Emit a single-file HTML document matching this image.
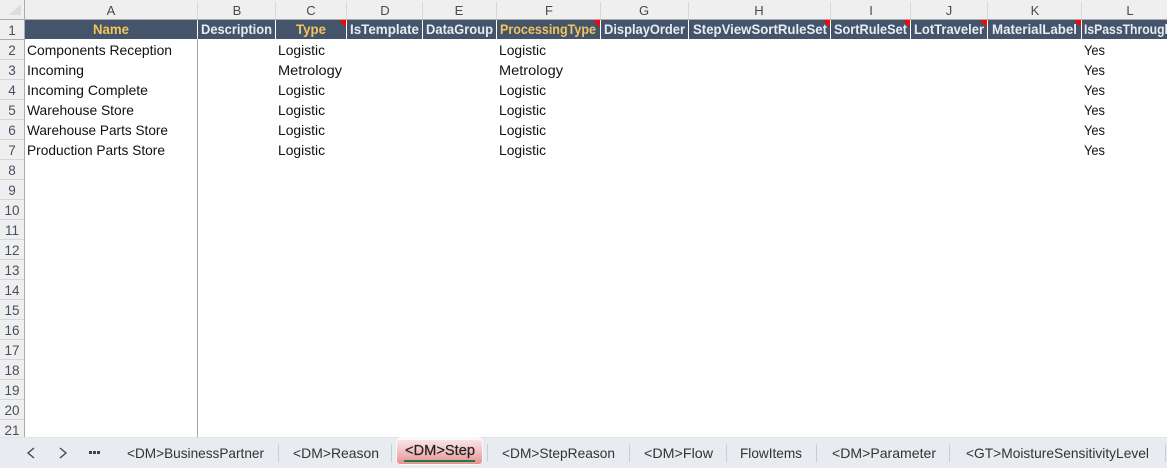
<!DOCTYPE html>
<html>
<head>
<meta charset="utf-8">
<style>
html,body{margin:0;padding:0;background:#fff;width:1167px;height:468px;overflow:hidden}
svg{display:block}
text{font-family:"Liberation Sans",sans-serif}
.b{font-size:14px;fill:#111}
.h{font-size:14px;font-weight:bold;fill:#e6ecf2}
.y{font-size:14px;font-weight:bold;fill:#f5c35c}
.c{font-size:13px;fill:#4a4a4a;text-anchor:middle}
.r{font-size:13.5px;fill:#445063;text-anchor:middle}
.t{font-size:14px;fill:#333}
</style>
</head>
<body>
<svg width="1167" height="468" viewBox="0 0 1167 468" xmlns="http://www.w3.org/2000/svg">
<defs>
<linearGradient id="tab" x1="0" y1="0" x2="0" y2="1">
<stop offset="0" stop-color="#f8e2e2"/>
<stop offset=".3" stop-color="#f3d0d0"/>
<stop offset="1" stop-color="#e88f8f"/>
</linearGradient>
</defs>
<rect width="1167" height="468" fill="#fff"/>
<!-- column header -->
<rect x="0" y="0" width="1167" height="19" fill="#efefef"/>
<rect x="0" y="0" width="24" height="437" fill="#efefef"/>
<polygon points="21,4 21,15 9,15" fill="#dcdcdc"/>
<rect x="0" y="19" width="1167" height="1" fill="#ababab"/>
<rect x="24" y="0" width="1" height="437" fill="#ababab"/>
<g fill="#d8d8d8">
<rect x="197" y="2" width="1" height="17"/><rect x="275" y="2" width="1" height="17"/><rect x="346" y="2" width="1" height="17"/><rect x="422" y="2" width="1" height="17"/><rect x="496" y="2" width="1" height="17"/><rect x="600" y="2" width="1" height="17"/><rect x="688" y="2" width="1" height="17"/><rect x="830" y="2" width="1" height="17"/><rect x="910" y="2" width="1" height="17"/><rect x="987" y="2" width="1" height="17"/><rect x="1081" y="2" width="1" height="17"/>
</g>
<g class="c">
<text class="c" x="111" y="15">A</text><text class="c" x="237" y="15">B</text><text class="c" x="311" y="15">C</text><text class="c" x="385" y="15">D</text><text class="c" x="459" y="15">E</text><text class="c" x="549" y="15">F</text><text class="c" x="644" y="15">G</text><text class="c" x="759" y="15">H</text><text class="c" x="871" y="15">I</text><text class="c" x="949" y="15">J</text><text class="c" x="1035" y="15">K</text><text class="c" x="1130" y="15">L</text>
</g>
<!-- row header lines -->
<g fill="#d6d6d6">
<rect x="0" y="59" width="24" height="1"/><rect x="0" y="79" width="24" height="1"/><rect x="0" y="99" width="24" height="1"/><rect x="0" y="119" width="24" height="1"/><rect x="0" y="139" width="24" height="1"/><rect x="0" y="159" width="24" height="1"/><rect x="0" y="179" width="24" height="1"/><rect x="0" y="199" width="24" height="1"/><rect x="0" y="219" width="24" height="1"/><rect x="0" y="239" width="24" height="1"/><rect x="0" y="259" width="24" height="1"/><rect x="0" y="279" width="24" height="1"/><rect x="0" y="299" width="24" height="1"/><rect x="0" y="319" width="24" height="1"/><rect x="0" y="339" width="24" height="1"/><rect x="0" y="359" width="24" height="1"/><rect x="0" y="379" width="24" height="1"/><rect x="0" y="399" width="24" height="1"/><rect x="0" y="419" width="24" height="1"/>
</g>
<rect x="0" y="39" width="24" height="1" fill="#ababab"/>
<text class="r" x="12" y="35">1</text><text class="r" x="12" y="55">2</text><text class="r" x="12" y="75">3</text><text class="r" x="12" y="95">4</text><text class="r" x="12" y="115">5</text><text class="r" x="12" y="135">6</text><text class="r" x="12" y="155">7</text><text class="r" x="12" y="175">8</text><text class="r" x="12" y="195">9</text><text class="r" x="12" y="215">10</text><text class="r" x="12" y="235">11</text><text class="r" x="12" y="255">12</text><text class="r" x="12" y="275">13</text><text class="r" x="12" y="295">14</text><text class="r" x="12" y="315">15</text><text class="r" x="12" y="335">16</text><text class="r" x="12" y="355">17</text><text class="r" x="12" y="375">18</text><text class="r" x="12" y="395">19</text><text class="r" x="12" y="415">20</text><text class="r" x="12" y="435">21</text>
<!-- header row -->
<rect x="25" y="20" width="1142" height="19" fill="#44546a"/>
<g fill="#fff">
<rect x="275" y="20" width="1" height="19"/><rect x="346" y="20" width="1" height="19"/><rect x="422" y="20" width="1" height="19"/><rect x="496" y="20" width="1" height="19"/><rect x="600" y="20" width="1" height="19"/><rect x="688" y="20" width="1" height="19"/><rect x="830" y="20" width="1" height="19"/><rect x="910" y="20" width="1" height="19"/><rect x="987" y="20" width="1" height="19"/><rect x="1081" y="20" width="1" height="19"/>
</g>
<rect x="197" y="20" width="1" height="417" fill="#a6a6a6"/>
<rect x="197" y="20" width="1" height="19" fill="#fff"/>
<g fill="#f00">
<polygon points="339,20 346,20 346,27"/><polygon points="593,20 600,20 600,27"/><polygon points="823,20 830,20 830,27"/><polygon points="903,20 910,20 910,27"/><polygon points="980,20 987,20 987,27"/><polygon points="1074,20 1081,20 1081,27"/>
</g>
<text class="y" x="93" y="34" textLength="36" lengthAdjust="spacingAndGlyphs">Name</text>
<text class="h" x="201" y="34" textLength="71" lengthAdjust="spacingAndGlyphs">Description</text>
<text class="y" x="296" y="34" textLength="30" lengthAdjust="spacingAndGlyphs">Type</text>
<text class="h" x="350" y="34" textLength="69" lengthAdjust="spacingAndGlyphs">IsTemplate</text>
<text class="h" x="426" y="34" textLength="67" lengthAdjust="spacingAndGlyphs">DataGroup</text>
<text class="y" x="500" y="34" textLength="96" lengthAdjust="spacingAndGlyphs">ProcessingType</text>
<text class="h" x="604" y="34" textLength="81" lengthAdjust="spacingAndGlyphs">DisplayOrder</text>
<text class="h" x="693" y="34" textLength="134" lengthAdjust="spacingAndGlyphs">StepViewSortRuleSet</text>
<text class="h" x="834" y="34" textLength="73" lengthAdjust="spacingAndGlyphs">SortRuleSet</text>
<text class="h" x="914" y="34" textLength="70" lengthAdjust="spacingAndGlyphs">LotTraveler</text>
<text class="h" x="992" y="34" textLength="85" lengthAdjust="spacingAndGlyphs">MaterialLabel</text>
<text class="h" x="1084" y="34" textLength="88" lengthAdjust="spacingAndGlyphs">IsPassThrough</text>
<!-- body -->
<text class="b" x="27" y="55" textLength="145" lengthAdjust="spacingAndGlyphs">Components Reception</text>
<text class="b" x="27" y="75" textLength="57" lengthAdjust="spacingAndGlyphs">Incoming</text>
<text class="b" x="27" y="95" textLength="121" lengthAdjust="spacingAndGlyphs">Incoming Complete</text>
<text class="b" x="27" y="115" textLength="107" lengthAdjust="spacingAndGlyphs">Warehouse Store</text>
<text class="b" x="27" y="135" textLength="141" lengthAdjust="spacingAndGlyphs">Warehouse Parts Store</text>
<text class="b" x="27" y="155" textLength="138" lengthAdjust="spacingAndGlyphs">Production Parts Store</text>
<text class="b" x="278" y="55" textLength="47" lengthAdjust="spacingAndGlyphs">Logistic</text>
<text class="b" x="278" y="75" textLength="64" lengthAdjust="spacingAndGlyphs">Metrology</text>
<text class="b" x="278" y="95" textLength="47" lengthAdjust="spacingAndGlyphs">Logistic</text>
<text class="b" x="278" y="115" textLength="47" lengthAdjust="spacingAndGlyphs">Logistic</text>
<text class="b" x="278" y="135" textLength="47" lengthAdjust="spacingAndGlyphs">Logistic</text>
<text class="b" x="278" y="155" textLength="47" lengthAdjust="spacingAndGlyphs">Logistic</text>
<text class="b" x="499" y="55" textLength="47" lengthAdjust="spacingAndGlyphs">Logistic</text>
<text class="b" x="499" y="75" textLength="64" lengthAdjust="spacingAndGlyphs">Metrology</text>
<text class="b" x="499" y="95" textLength="47" lengthAdjust="spacingAndGlyphs">Logistic</text>
<text class="b" x="499" y="115" textLength="47" lengthAdjust="spacingAndGlyphs">Logistic</text>
<text class="b" x="499" y="135" textLength="47" lengthAdjust="spacingAndGlyphs">Logistic</text>
<text class="b" x="499" y="155" textLength="47" lengthAdjust="spacingAndGlyphs">Logistic</text>
<text class="b" x="1084" y="55" textLength="21" lengthAdjust="spacingAndGlyphs">Yes</text>
<text class="b" x="1084" y="75" textLength="21" lengthAdjust="spacingAndGlyphs">Yes</text>
<text class="b" x="1084" y="95" textLength="21" lengthAdjust="spacingAndGlyphs">Yes</text>
<text class="b" x="1084" y="115" textLength="21" lengthAdjust="spacingAndGlyphs">Yes</text>
<text class="b" x="1084" y="135" textLength="21" lengthAdjust="spacingAndGlyphs">Yes</text>
<text class="b" x="1084" y="155" textLength="21" lengthAdjust="spacingAndGlyphs">Yes</text>
<!-- tab bar -->
<rect x="0" y="437" width="1167" height="31" fill="#e8ebef"/>
<rect x="0" y="437" width="1167" height="1" fill="#dfe2e6"/>
<path d="M34 448 L28 453 L34 458" fill="none" stroke="#444" stroke-width="1.3"/>
<path d="M60 448 L66 453 L60 458" fill="none" stroke="#444" stroke-width="1.3"/>
<g fill="#444"><rect x="89" y="451" width="3" height="3"/><rect x="93" y="451" width="3" height="3"/><rect x="97" y="451" width="3" height="3"/></g>
<g fill="#c9ccd0">
<rect x="278" y="444" width="1" height="18"/><rect x="391" y="444" width="1" height="18"/><rect x="487" y="444" width="1" height="18"/><rect x="629" y="444" width="1" height="18"/><rect x="726" y="444" width="1" height="18"/><rect x="816" y="444" width="1" height="18"/><rect x="949" y="444" width="1" height="18"/><rect x="1165" y="444" width="1" height="18"/>
</g>
<rect x="396" y="437" width="87" height="28" rx="5" fill="#f7f8fa"/>
<rect x="397" y="440" width="85" height="24" rx="3" fill="url(#tab)"/>
<rect x="404" y="460" width="71" height="2" fill="#1f7a4d"/>
<text class="t" x="127" y="458" textLength="137" lengthAdjust="spacingAndGlyphs">&lt;DM&gt;BusinessPartner</text>
<text class="t" x="293" y="458" textLength="86" lengthAdjust="spacingAndGlyphs">&lt;DM&gt;Reason</text>
<text class="t" x="405" y="455" textLength="70" lengthAdjust="spacingAndGlyphs" style="fill:#222;font-size:14.5px;stroke:#222;stroke-width:.2">&lt;DM&gt;Step</text>
<text class="t" x="502" y="458" textLength="113" lengthAdjust="spacingAndGlyphs">&lt;DM&gt;StepReason</text>
<text class="t" x="644" y="458" textLength="69" lengthAdjust="spacingAndGlyphs">&lt;DM&gt;Flow</text>
<text class="t" x="740" y="458" textLength="62" lengthAdjust="spacingAndGlyphs">FlowItems</text>
<text class="t" x="832" y="458" textLength="104" lengthAdjust="spacingAndGlyphs">&lt;DM&gt;Parameter</text>
<text class="t" x="966" y="458" textLength="183" lengthAdjust="spacingAndGlyphs">&lt;GT&gt;MoistureSensitivityLevel</text>
</svg>
</body>
</html>
